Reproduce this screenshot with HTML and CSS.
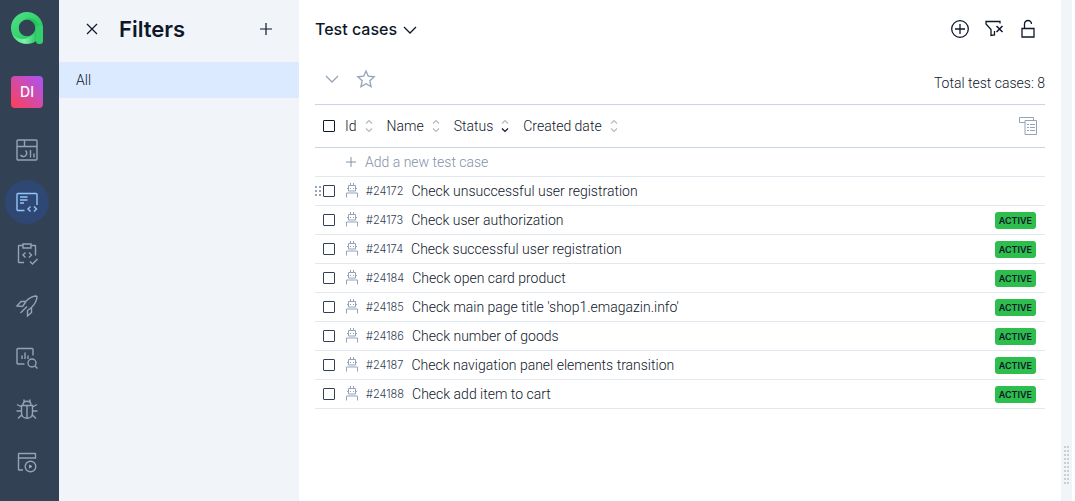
FILE: index.html
```html
<!DOCTYPE html>
<html lang="en">
<head>
<meta charset="utf-8">
<title>Test cases</title>
<link rel="stylesheet" href="styles.css">
</head>
<body>
<svg class="defs" aria-hidden="true">
  <symbol id="sort" viewBox="0 0 8 14"><path class="sort-up" d="M1 4.500 4 1.500 7 4.500"/><path class="sort-down" d="M1 9.500 4 12.500 7 9.500"/></symbol>
  <symbol id="robot" viewBox="0 0 14 16"><path d="M5.500 1v2.500M8.500 1v2.500M3.500 3.500h7v5.500h-7zM2 6.500h1M11 6.500h1M5 6.500h1M8 6.500h1M1.500 15.500v-4.500h11v4.500"/></symbol>
</svg>
<div class="app">
  <aside class="sidebar">
    <a class="logo" href="#" aria-label="Home">
      <svg width="32" height="32" viewBox="0 0 32 32">
        <defs>
          <linearGradient id="ring" x1="0" y1="0" x2="1" y2="1"><stop offset="0" stop-color="#4ade80"/><stop offset="1" stop-color="#22c55e"/></linearGradient>
          <linearGradient id="low" x1="0" y1="0" x2="1" y2="0"><stop offset="0" stop-color="#4ade80"/><stop offset=".5" stop-color="#86efac"/><stop offset="1" stop-color="#22c55e"/></linearGradient>
        </defs>
        <circle cx="16" cy="16" r="12" fill="none" stroke="url(#ring)" stroke-width="8"/>
        <path d="M12 8.500C19 3 29 8 28 18l-4 6c2-9-3-16-12-15.500z" fill="#22c55e"/>
        <path d="M1 21c4 7 15 9 22 0l3 7C17 35 4 32 1 21z" fill="url(#low)"/>
        <circle cx="16" cy="16" r="8.200" fill="#334155"/>
        <path d="M25 14h7v15a3 3 0 0 1-3 3h-1a3 3 0 0 1-3-3z" fill="#32cf6c"/>
      </svg>
    </a>
    <button class="project">DI</button>
    <nav class="nav">
      <a class="nav-item" href="#" aria-label="Dashboards"><svg width="24" height="24" viewBox="0 0 24 24"><rect x="2" y="2" width="20" height="20" rx="1"/><path d="M2 8.500h20M9.500 2v6.500M10.500 12.500a3.400 3.400 0 1 1-5 4.500M15.500 12v7.500M19 15.500v4"/></svg></a>
      <a class="nav-item nav-item-active" href="#" aria-label="Test cases"><svg width="24" height="24" viewBox="0 0 24 24"><path d="M9.500 20.500H3a1 1 0 0 1-1-1V4.500a1 1 0 0 1 1-1h18a1 1 0 0 1 1 1V15M5 7h7.500M5 10h7.500M5 13h4M15.500 16.500 13 19l2.500 2.500M19 16.500l2.500 2.500-2.500 2.500"/></svg></a>
      <a class="nav-item" href="#" aria-label="Launch plans"><svg width="24" height="24" viewBox="0 0 24 24"><path d="M9 20.500H4a.5.5 0 0 1-.5-.5V4a.5.5 0 0 1 .5-.5h4M16 3.500h4a.5.5 0 0 1 .5.5v9.500M8 2h8v4H8zM10.500 10.500 8 13l2.500 2.500M14 10.500l2.500 2.500-2.500 2.500M15 19.500l2.500 2.500 5-5"/></svg></a>
      <a class="nav-item" href="#" aria-label="Launches"><svg width="24" height="24" viewBox="0 0 24 24"><path d="M22 2c-5 0-8 2-11.500 5.500H6L2 12l5.500.500M22 2c0 5-2 8-5.500 11.500v5L12.500 22v-5.500l4-3M7.500 12.500l3.500-5M12 12.500l-6.500 6.500"/></svg></a>
      <a class="nav-item" href="#" aria-label="Analytics"><svg width="24" height="24" viewBox="0 0 24 24"><path d="M9.500 18H3a1 1 0 0 1-1-1V3.500a1 1 0 0 1 1-1h14a1 1 0 0 1 1 1V9.500M7 9.500V13M10 6.500V13M13 9.500V13M20 20l2.500 2.500"/><circle cx="17" cy="17" r="4"/></svg></a>
      <a class="nav-item" href="#" aria-label="Defects"><svg width="24" height="24" viewBox="0 0 24 24"><path d="M8 7c0-5 8-5 8 0M9 1.500v1.500l1 1M15 1.500v1.500l-1 1M6.500 7.500h11v7.500c0 7-11 7-11 0zM12 7.500v12.500M2 6.500 6.500 9M22 6.500 17.500 9M1.500 13h5M17.500 13h5M3 20.500l4-4M21 20.500l-4-4"/></svg></a>
      <a class="nav-item" href="#" aria-label="Jobs"><svg width="24" height="24" viewBox="0 0 24 24"><path d="M8 20H4a.5.5 0 0 1-.5-.5V4a.5.5 0 0 1 .5-.5h16a.5.5 0 0 1 .5.500V8h-17"/><circle cx="15.500" cy="16.500" r="5.300"/><path class="solid" d="M14.500 15v3l2.500-1.500z"/></svg></a>
    </nav>
  </aside>

  <section class="filters">
    <header class="filters-head">
      <button class="icon-btn" aria-label="Close"><svg width="16" height="16" viewBox="0 0 16 16"><path d="M3 3l10 10M13 3 3 13"/></svg></button>
      <h1 class="filters-title">Filters</h1>
      <button class="icon-btn" aria-label="Add filter"><svg width="16" height="16" viewBox="0 0 16 16"><path d="M8 2v12M2 8h12"/></svg></button>
    </header>
    <a class="filter filter-active" href="#">All</a>
  </section>

  <main class="main">
    <header class="bar">
      <button class="view-btn">Test cases <svg width="16" height="16" viewBox="0 0 16 16"><path d="M2 6l6 6 6-6"/></svg></button>
      <div class="actions">
        <button class="icon-btn" aria-label="Create"><svg width="20" height="20" viewBox="0 0 20 20"><circle cx="10" cy="10" r="8.300"/><path d="M10 5v10M5 10h10"/></svg></button>
        <button class="icon-btn" aria-label="Clear filter"><svg width="20" height="20" viewBox="0 0 20 20"><path d="M16 4.500V2.500H2V5l5 5.500v6l3.500-.5v-4"/><path class="bold" d="M12.500 7l6 6M18.500 7l-6 6"/></svg></button>
        <button class="icon-btn" aria-label="Unlock"><svg width="20" height="20" viewBox="0 0 20 20"><path d="M4 9.500h12v8.500H4zM6.500 9.500V5a3.500 3.500 0 0 1 7 0"/></svg></button>
      </div>
    </header>
    <div class="toolbar">
      <div class="tools">
        <button class="icon-btn muted" aria-label="Expand"><svg width="16" height="16" viewBox="0 0 16 16"><path d="M2 5l6 6 6-6"/></svg></button>
        <button class="icon-btn muted" aria-label="Favourite"><svg width="20" height="20" viewBox="0 0 20 20"><path d="M10 2l2.300 5.200 5.900.6-4.400 4 1.300 6L10 14.800 4.900 17.800l1.300-6-4.400-4 5.900-.6z"/></svg></button>
      </div>
      <span class="total">Total test cases: 8</span>
    </div>
    <div class="columns">
      <input class="check check-dark" type="checkbox" aria-label="Select all">
      <div class="sorts">
        <button class="sort">Id <svg width="8" height="14"><use href="#sort"/></svg></button>
        <button class="sort">Name <svg width="8" height="14"><use href="#sort"/></svg></button>
        <button class="sort sort-desc">Status <svg width="8" height="14"><use href="#sort"/></svg></button>
        <button class="sort">Created date <svg width="8" height="14"><use href="#sort"/></svg></button>
      </div>
      <button class="icon-btn muted columns-btn" aria-label="Columns"><svg width="20" height="20" viewBox="0 0 20 20"><path d="M7 6.500H1.500v-5h14v3M7 4.500h11.500v14H7zM9 8.500h2M12 8.500h5M9 11.500h2M12 11.500h5M9 14.500h2M12 14.500h5"/></svg></button>
    </div>
    <button class="add"><svg width="12" height="12" viewBox="0 0 12 12"><path d="M6 1v10M1 6h10"/></svg>Add a new test case</button>
    <ul class="rows">
      <li class="row"><span class="grip"></span><input class="check" type="checkbox" aria-label="24172"><svg class="robot" width="14" height="16"><use href="#robot"/></svg><span class="id">#24172</span><a class="name" href="#">Check unsuccessful user registration</a></li>
      <li class="row"><input class="check" type="checkbox" aria-label="24173"><svg class="robot" width="14" height="16"><use href="#robot"/></svg><span class="id">#24173</span><a class="name" href="#">Check user authorization</a><span class="badge">ACTIVE</span></li>
      <li class="row"><input class="check" type="checkbox" aria-label="24174"><svg class="robot" width="14" height="16"><use href="#robot"/></svg><span class="id">#24174</span><a class="name" href="#">Check successful user registration</a><span class="badge">ACTIVE</span></li>
      <li class="row"><input class="check" type="checkbox" aria-label="24184"><svg class="robot" width="14" height="16"><use href="#robot"/></svg><span class="id">#24184</span><a class="name" href="#">Check open card product</a><span class="badge">ACTIVE</span></li>
      <li class="row"><input class="check" type="checkbox" aria-label="24185"><svg class="robot" width="14" height="16"><use href="#robot"/></svg><span class="id">#24185</span><a class="name" href="#">Check main page title 'shop1.emagazin.info'</a><span class="badge">ACTIVE</span></li>
      <li class="row"><input class="check" type="checkbox" aria-label="24186"><svg class="robot" width="14" height="16"><use href="#robot"/></svg><span class="id">#24186</span><a class="name" href="#">Check number of goods</a><span class="badge">ACTIVE</span></li>
      <li class="row"><input class="check" type="checkbox" aria-label="24187"><svg class="robot" width="14" height="16"><use href="#robot"/></svg><span class="id">#24187</span><a class="name" href="#">Check navigation panel elements transition</a><span class="badge">ACTIVE</span></li>
      <li class="row"><input class="check" type="checkbox" aria-label="24188"><svg class="robot" width="14" height="16"><use href="#robot"/></svg><span class="id">#24188</span><a class="name" href="#">Check add item to cart</a><span class="badge">ACTIVE</span></li>
    </ul>
  </main>
  <div class="resizer"><span class="resizer-dots"></span></div>
</div>
</body>
</html>
```

FILE: styles.css
```css
* { box-sizing: border-box; }

body {
  margin: 0;
  background: #fff;
  color: #0f172a;
  font: 300 14px/20px Roboto, "Liberation Sans", sans-serif;
}

button {
  padding: 0;
  border: 0;
  background: none;
  color: inherit;
  font: inherit;
  cursor: pointer;
}

a { color: inherit; text-decoration: none; }

svg {
  display: block;
  flex: none;
  fill: none;
  stroke: currentColor;
}

.defs { position: absolute; width: 0; height: 0; }

.app { display: flex; min-height: 100vh; padding-right: 3px; }

.sidebar {
  display: flex;
  flex: none;
  flex-direction: column;
  align-items: center;
  width: 59px;
  padding: 12px 5px 0 0;
  background: #334155;
}

.logo svg { stroke: none; }

.project {
  width: 32px;
  height: 32px;
  margin: 32px 0 20px;
  border-radius: 4px;
  background: linear-gradient(45deg, #ff3f55, #a855f7);
  color: #fff;
  font-family: Inter, sans-serif;
  font-weight: 500;
}

.nav { display: flex; flex-direction: column; gap: 8px; }

.nav-item {
  display: grid;
  place-items: center;
  width: 44px;
  height: 44px;
  border-radius: 50%;
  color: #94a3b8;
}

.nav-item svg { stroke-width: 1.4; }
.nav-item .solid { fill: currentColor; stroke-width: 1; }
.nav-item-active { background: #2f4873; color: #93c5fd; }

.filters { flex: none; width: 240px; background: #f1f5f9; }

.filters-head {
  display: flex;
  align-items: center;
  height: 62px;
  padding: 0 25px 4px;
}

.filters-title {
  flex: 1;
  margin: 0 0 0 19px;
  font-family: Inter, sans-serif;
  font-size: 22px;
  font-weight: 600;
  line-height: 28px;
}

.filter { display: block; padding: 8px 17px; }
.filter-active { background: #dbeafe; }

.icon-btn { flex: none; }
.filters-head svg { stroke-width: 1.2; }

.main { flex: 1; min-width: 0; padding: 0 16px; }

.bar {
  display: flex;
  align-items: center;
  justify-content: space-between;
  height: 58px;
}

.view-btn {
  display: flex;
  align-items: center;
  gap: 5px;
  font-family: Inter, sans-serif;
  font-size: 16px;
  font-weight: 500;
}

.view-btn svg { stroke-width: 1.3; }

.actions { display: flex; gap: 14px; padding-right: 7px; }
.actions svg { stroke-width: 1.3; }
.actions .bold { stroke-width: 1.5; }

.toolbar {
  display: flex;
  align-items: center;
  justify-content: space-between;
  height: 46px;
}

.tools { display: flex; align-items: center; gap: 16px; padding: 0 0 4px 9px; }
.tools svg { stroke-width: 1.3; }
.total { padding-top: 4px; }
.muted { color: #94a3b8; }

.columns {
  display: flex;
  align-items: center;
  height: 44px;
  padding: 0 7px 0 8px;
  border: solid #cbd5e1;
  border-width: 1px 0;
}

.sorts { display: flex; gap: 14px; margin-left: 10px; }
.sort { display: flex; align-items: center; gap: 8px; }
.sort svg { color: #b4bac4; stroke-width: 1.2; }
.sort-desc { --down: #0f172a; }
.sort-down { stroke: var(--down, currentColor); }
.columns-btn { margin-left: auto; }

.check {
  flex: none;
  width: 12px;
  height: 12px;
  margin: 0;
  border: 1px solid #334155;
  border-radius: 1px;
  background: #fff;
  appearance: none;
}

.check-dark { border-color: #0f172a; }

.add {
  display: flex;
  align-items: center;
  gap: 8px;
  width: 100%;
  height: 29px;
  padding-left: 30px;
  border-bottom: 1px solid #e2e8f0;
  color: #8492a8;
}

.rows { margin: 0; padding: 0; list-style: none; }

.row {
  position: relative;
  display: flex;
  align-items: center;
  height: 29px;
  padding: 0 9px 0 8px;
  border-bottom: 1px solid #e2e8f0;
}

.robot { margin: 0 7px 2px 10px; color: #94a3b8; }

.id {
  margin-right: 8px;
  color: #334155;
  font-family: Inter, sans-serif;
  font-size: 11px;
}

.badge {
  margin-left: auto;
  padding: 0 4px;
  border-radius: 3px;
  background: #2dbe4e;
  font-family: Inter, sans-serif;
  font-size: 9px;
  font-weight: 600;
  line-height: 17px;
}

.grip {
  position: absolute;
  left: 0;
  width: 6px;
  height: 10px;
  background: conic-gradient(from 270deg at 2px 2px, #94a3b8 90deg, transparent 0) 0 0 / 4px 4px;
}

.resizer {
  display: flex;
  flex: none;
  align-items: flex-end;
  justify-content: center;
  width: 11px;
  padding-bottom: 17px;
  background: #f1f5f9;
}

.resizer-dots {
  width: 5px;
  height: 38px;
  background: conic-gradient(from 270deg at 2px 2px, #cbced3 90deg, transparent 0) 0 0 / 3px 4px;
}
```
